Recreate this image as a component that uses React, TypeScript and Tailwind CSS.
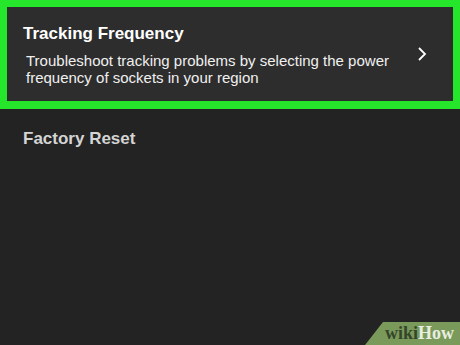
export default function App() {
  return (
    <div
      className="relative w-[460px] h-[345px] overflow-hidden bg-[#232323]"
      style={{ fontFamily: '"Liberation Sans", Arial, sans-serif' }}
    >
      {/* Highlighted setting */}
      <div className="h-[109px] border-[7px] border-b-[8px] border-[#26e62b] bg-[#2d2d2d]">
        <div className="flex items-center pl-4 pr-[26px] pt-[17px]">
          <div className="flex-1">
            <div className="text-[17px] leading-[20px] font-bold text-white">
              Tracking Frequency
            </div>
            <div className="mt-[8px] pl-[3px] text-[15px] leading-[17px] text-[#f0f0f0]">
              Troubleshoot tracking problems by selecting the power
              <br />
              frequency of sockets in your region
            </div>
          </div>
          <svg width="10" height="14" viewBox="0 0 10 14" className="mt-[-2px]">
            <polyline
              points="2,1 8,7 2,13"
              fill="none"
              stroke="#ffffff"
              strokeWidth="1.8"
            />
          </svg>
        </div>
      </div>

      {/* Next row */}
      <div className="px-[23px] pt-[20px]">
        <div className="text-[17px] leading-[20px] font-bold text-[#d4d4d4]">
          Factory Reset
        </div>
      </div>

      {/* wikiHow badge */}
      <div className="absolute right-0 bottom-0 h-[23px] w-[95px] bg-[#7a9a5b] [clip-path:polygon(18px_0,100%_0,100%_100%,0_100%)] shadow-[0_-2px_3px_rgba(0,0,0,0.6)]">
        <div
          className="pl-[20px] pt-[1px] text-[18px] leading-[20px] font-bold"
          style={{ fontFamily: '"Liberation Serif", "DejaVu Serif", serif' }}
        >
          <span className="text-[#34452a]">wiki</span>
          <span className="text-[#e9eee2]">How</span>
        </div>
      </div>
    </div>
  );
}
